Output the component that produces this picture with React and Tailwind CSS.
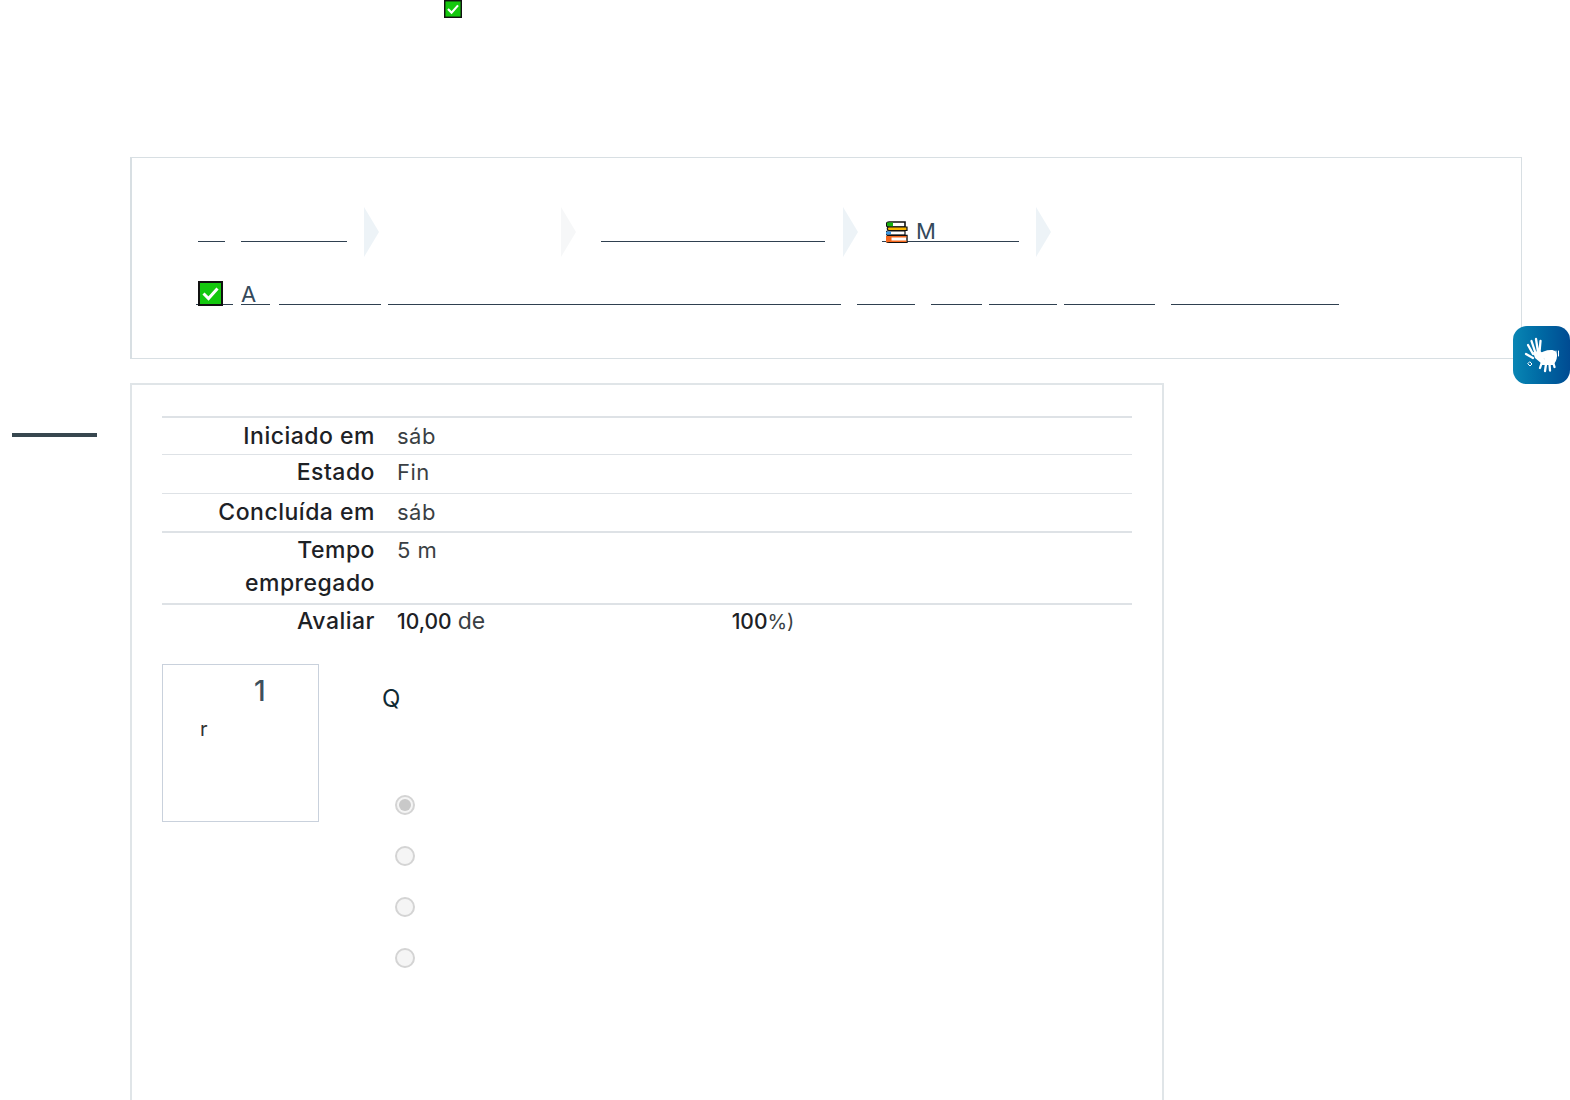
import React from 'react';

function CheckIcon({ className }) {
  return (
    <svg viewBox="0 0 25 25" className={className}>
      <rect x="1" y="1" width="23" height="23" fill="#14c80e" stroke="#111" strokeWidth="2" />
      <path d="M5.500 12.500 L10.500 17.500 L19.500 7.500" fill="none" stroke="#fff" strokeWidth="3" />
    </svg>
  );
}

function BooksIcon() {
  return (
    <svg viewBox="0 0 22 22" className="absolute left-[4px] top-0 w-[22px] h-[22px]">
      <path d="M3 1h16v5H3a2.500 2.500 0 0 1 0-5z" fill="#fff" stroke="#111" strokeWidth="1.600" />
      <path d="M1 1.500h6v4H3a2 2 0 0 1-2-2z" fill="#16b30e" />
      <path d="M3 6h18v3.500H3a1.700 1.700 0 0 1 0-3.500z" fill="#f7b500" stroke="#111" strokeWidth="1.200" />
      <path d="M2 10h17v4H2a2 2 0 0 1 0-4z" fill="#fff" stroke="#111" strokeWidth="1.200" />
      <path d="M1 10.500h4v3H2a1.500 1.500 0 0 1-1-3z" fill="#3b97e3" />
      <path d="M3 14.500h18v7H3a3.500 3.500 0 0 1 0-7z" fill="#fff" stroke="#111" strokeWidth="1.400" />
      <path d="M.500 15h5v6H3a3 3 0 0 1-2.500-6zM5 15h15.500v1.500H5zM5 19.500h15.500V21H5z" fill="#f4661b" />
    </svg>
  );
}

function Chevron({ className }) {
  return <div className={`w-[15px] h-[50px] [clip-path:polygon(0_0,100%_50%,0_100%)] ${className}`} />;
}

function HandsIcon() {
  return (
    <svg viewBox="0 0 57 58" className="w-[57px] h-[58px]" fill="none" stroke="#fff" strokeLinecap="round">
      <g strokeWidth="2.300">
        <path d="M15 19l5 9M18.500 15l4 12M23 13l2 13M27.500 15l-1 11M13 28l7 4" />
      </g>
      <path d="M20 26l7-1 5 4-5 1 5 3-4 4-6-5z" fill="#fff" stroke="none" />
      <path d="M24 29c4-3 9-5 14-5 4 0 6 2 6 6 0 4-2 7-4 9l-11 0-1-5 4-1-8-2z" fill="#fff" stroke="none" />
      <g strokeWidth="2.300">
        <path d="M29 36l-2 6M33 38l-1 7M36.500 38l.500 6.500M40 36l1.500 5" />
      </g>
      <path d="M43 25v5M45.500 25v5" strokeWidth="1" />
      <path d="M17 36l2 2-2 2-2-2z" strokeWidth="1" />
    </svg>
  );
}

function Radio({ checked }) {
  return (
    <div className="w-[20px] h-[20px] rounded-full border-2 border-[#d4d4d4] bg-[#f5f5f5] flex items-center justify-center">
      {checked && <div className="w-[12px] h-[12px] rounded-full bg-[#c9c9c9]" />}
    </div>
  );
}

const rows = [
  { label: 'Iniciado em', value: 'sáb', height: 'h-[38px] pt-[2px]', line: 'border-t-2' },
  { label: 'Estado', value: 'Fin', height: 'h-[39px] pt-[1px]', line: 'border-t' },
  { label: 'Concluída em', value: 'sáb', height: 'h-[38px] pt-[2px]', line: 'border-t' },
  { label: 'Tempo empregado', value: '5 m', height: 'h-[72px] pt-[1px]', line: 'border-t-2' },
];

const underline = 'border-b border-[#2f4050]';

export default function App() {
  return (
    <div className="relative w-[1570px] h-[1100px] overflow-hidden bg-white font-['Inter','Liberation_Sans',sans-serif] text-[#1d2125]">
      <div className="h-[157px] pl-[444px]">
        <CheckIcon className="w-[18px] h-[18px]" />
      </div>

      <div className="ml-[130px] w-[1392px] h-[202px] border border-l-2 border-[#d8dfe3] pt-[49px] pl-[66px]">
        <div className="flex items-start h-[50px]">
          <span className={`w-[27px] h-[35px] ${underline}`} />
          <span className={`ml-[16px] w-[106px] h-[35px] ${underline}`} />
          <Chevron className="ml-[17px] bg-[#edf3f7]" />
          <Chevron className="ml-[182px] bg-[#f6f7f8]" />
          <span className={`ml-[25px] w-[224px] h-[35px] ${underline}`} />
          <Chevron className="ml-[18px] bg-[#edf3f7]" />
          <span className={`relative ml-[24px] w-[137px] h-[35px] pl-[34px] pt-[11px] text-[22px] leading-[27px] text-[#34495b] ${underline}`}>
            <span className="absolute left-0 top-[14px] w-[26px] h-[22px]"><BooksIcon /></span>
            M
          </span>
          <Chevron className="ml-[17px] bg-[#edf3f7]" />
        </div>

        <div className="flex items-start h-[26px] mt-[25px] -ml-[2px]">
          <span className={`relative w-[37px] h-[23px] ${underline}`}>
            <CheckIcon className="absolute left-[2px] -top-[1px] w-[25px] h-[25px]" />
          </span>
          <span className={`ml-[8px] w-[29px] h-[23px] text-[22px] leading-[24px] text-[#34495b] ${underline}`}>A</span>
          <span className={`ml-[9px] w-[102px] h-[23px] ${underline}`} />
          <span className={`ml-[7px] w-[453px] h-[23px] ${underline}`} />
          <span className={`ml-[16px] w-[58px] h-[23px] ${underline}`} />
          <span className={`ml-[16px] w-[51px] h-[23px] ${underline}`} />
          <span className={`ml-[7px] w-[68px] h-[23px] ${underline}`} />
          <span className={`ml-[7px] w-[91px] h-[23px] ${underline}`} />
          <span className={`ml-[16px] w-[168px] h-[23px] ${underline}`} />
        </div>
      </div>

      <div className="flex mt-[24px]">
        <div className="w-[130px] pl-[12px] pt-[50px]">
          <div className="w-[85px] h-[4px] bg-[#37474f]" />
        </div>

        <div className="w-[1034px] h-[760px] border-2 border-[#e0e5e8] pt-[31px] pl-[30px] pr-[30px]">
          {rows.map((row) => (
            <div key={row.label} className={`flex ${row.height} ${row.line} border-[#dee2e6] leading-[33px]`}>
              <div className="w-[213px] pl-[10px] text-right font-medium text-[23px] tracking-[0.5px]">{row.label}</div>
              <div className="ml-[22px] text-[#3a3f44] text-[22px] tracking-[0.5px]">{row.value}</div>
            </div>
          ))}
          <div className="flex h-[40px] border-t-2 border-[#dee2e6] leading-[33px]">
            <div className="w-[213px] pl-[10px] text-right font-medium text-[23px] tracking-[0.5px]">Avaliar</div>
            <div className="ml-[22px] text-[#3a3f44] flex text-[22px]">
              <span className="font-medium text-[21px] text-[#1d2125]">10,00</span>
              <span className="ml-[6px] w-[274px] text-[23px]">de</span>
              <span><span className="font-medium text-[21px] text-[#1d2125]">100</span><span className="text-[20px]">%)</span></span>
            </div>
          </div>

          <div className="flex mt-[21px]">
            <div className="w-[157px] h-[158px] border border-[#c9d1dc] pl-[37px] pt-[7px]">
              <div className="pl-[54px] text-[28px] leading-[38px] font-medium text-[#3d4f5c]">1</div>
              <div className="mt-[7px] text-[20px] leading-[24px] text-[#333]">r</div>
            </div>
            <div className="ml-[63px] pt-[20px]">
              <div className="text-[24px] leading-[30px] text-[#0f2a33]">Q</div>
              <div className="mt-[81px] ml-[13px] flex flex-col gap-[31px]">
                <Radio checked />
                <Radio />
                <Radio />
                <Radio />
              </div>
            </div>
          </div>
        </div>
      </div>

      <div className="absolute left-[1513px] top-[326px] w-[57px] h-[58px] rounded-[14px] bg-gradient-to-r from-[#0a86b4] to-[#004b92] flex items-center justify-center">
        <HandsIcon />
      </div>
    </div>
  );
}
